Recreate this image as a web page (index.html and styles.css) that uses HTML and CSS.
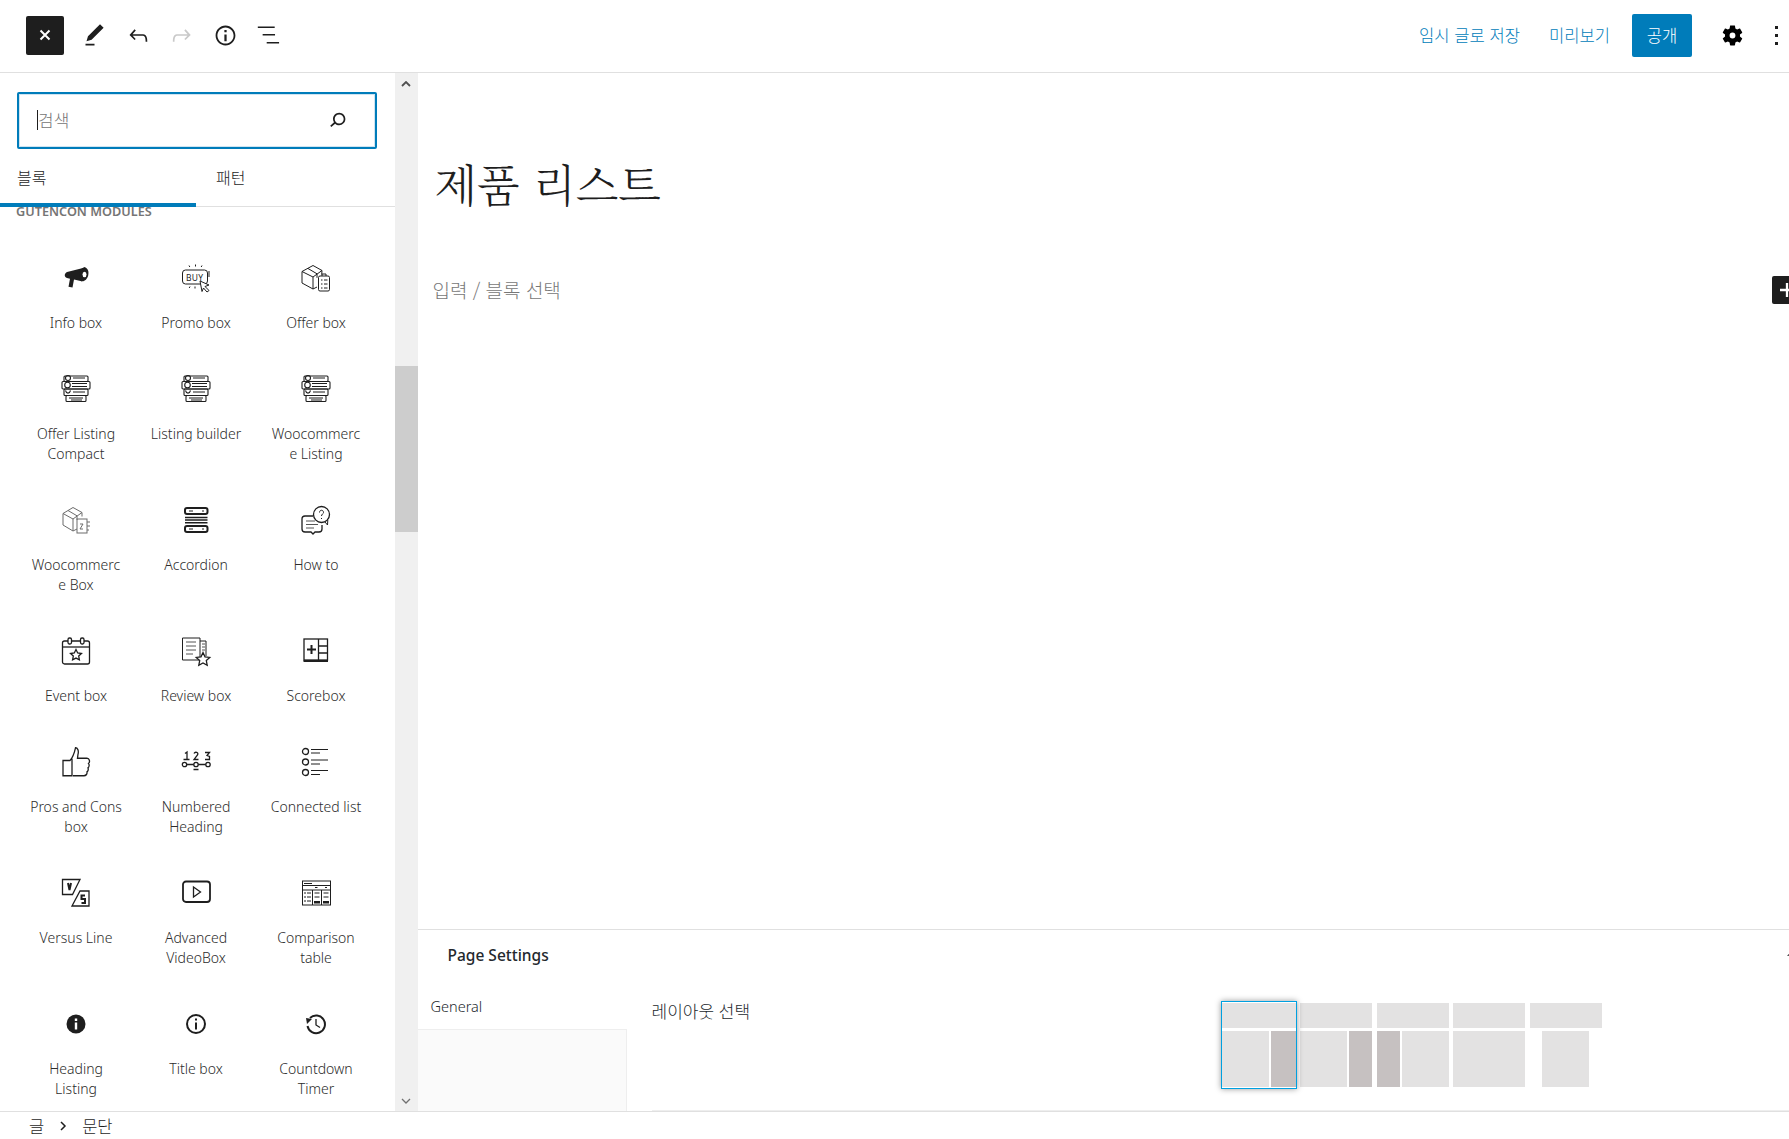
FILE: index.html
```html
<!DOCTYPE html>
<html lang="ko">
<head>
<meta charset="utf-8">
<title>제품 리스트</title>
<link rel="stylesheet" href="styles.css">
</head>
<body>
<div class="app">
  <header class="topbar">
    <div class="tools">
      <button class="close-btn" aria-label="닫기"><svg viewBox="0 0 16 16" width="16" height="16"><path d="M3.500 3.500l9 9M12.500 3.500l-9 9" stroke="#fff" stroke-width="2" fill="none"/></svg></button>
      <span class="tool"><svg viewBox="0 0 24 24"><path d="M20.100 5.100L16.900 2 6.200 12.700l-1.300 4.400 4.500-1.300L20.100 5.100zM4 20.800h8v-1.500H4v1.500z"/></svg></span>
      <span class="tool"><svg viewBox="0 0 24 24"><path d="M18.300 11.700c-.6-.6-1.400-.9-2.300-.9H6.700l2.900-3.300-1.100-1-4.500 5L8.500 16l1-1-2.700-2.700H16c.5 0 .9.2 1.300.5 1 1 1 3.400 1 4.500v.3h1.500v-.2c0-1.500 0-4.300-1.500-5.700z"/></svg></span>
      <span class="tool tool-off"><svg viewBox="0 0 24 24"><path d="M15.600 6.500l-1.100 1 2.900 3.300H8c-.9 0-1.700.3-2.300.9-1.400 1.500-1.400 4.200-1.400 5.700v.2h1.500v-.3c0-1.100 0-3.500 1-4.500.3-.3.7-.5 1.300-.5h9.200L14.500 15l1.100 1.100 4.600-4.600-4.600-5z"/></svg></span>
      <span class="tool"><svg viewBox="0 0 24 24"><path d="M12 3.200c-4.800 0-8.800 3.900-8.800 8.800 0 4.800 3.900 8.800 8.800 8.800 4.800 0 8.800-3.900 8.800-8.800 0-4.800-4-8.800-8.800-8.800zm0 16c-4 0-7.200-3.300-7.200-7.200C4.800 8 8 4.800 12 4.800s7.200 3.300 7.200 7.200c0 4-3.200 7.200-7.200 7.200zM11 17h2v-6h-2v6zm0-8h2V7h-2v2z"/></svg></span>
      <span class="tool"><svg viewBox="0 0 24 24"><path d="M2.500 4h15v1.400h-15zM6.800 10.600h11v1.400h-11zM10.400 17.800h11v1.400h-11z"/></svg></span>
    </div>
    <div class="actions">
      <a class="link save">임시 글로 저장</a>
      <a class="link preview">미리보기</a>
      <button class="publish">공개</button>
      <span class="gear"><svg viewBox="0 0 24 24" width="25" height="25"><path fill-rule="evenodd" d="M19.140 12.940c.04-.3.06-.61.06-.94 0-.32-.02-.64-.07-.94l2.030-1.580c.18-.14.23-.41.12-.61l-1.920-3.320c-.12-.22-.37-.29-.59-.22l-2.390.96c-.5-.38-1.030-.7-1.620-.94l-.36-2.540c-.04-.24-.24-.41-.48-.41h-3.840c-.24 0-.43.17-.47.41l-.36 2.540c-.59.24-1.130.57-1.620.94l-2.390-.96c-.22-.08-.47 0-.59.22L2.740 8.870c-.12.21-.08.47.12.61l2.030 1.580c-.05.3-.09.63-.09.94s.02.64.07.94l-2.030 1.580c-.18.14-.23.41-.12.61l1.920 3.320c.12.22.37.29.59.22l2.390-.96c.5.38 1.030.7 1.620.94l.36 2.540c.05.24.24.41.48.41h3.840c.24 0 .44-.17.47-.41l.36-2.540c.59-.24 1.130-.56 1.620-.94l2.390.96c.22.08.47 0 .59-.22l1.920-3.320c.12-.22.07-.47-.12-.61l-2.010-1.580zM12 14.800a2.800 2.800 0 1 1 0-5.600 2.800 2.800 0 0 1 0 5.600z"/></svg></span>
      <span class="kebab"><i></i><i></i><i></i></span>
    </div>
  </header>

  <main class="main">
    <aside class="inserter">
      <div class="panel">
        <div class="search">
          <span class="caret"></span><span class="search-ph">검색</span>
          <svg class="search-icon" viewBox="0 0 24 24" width="27" height="27"><path d="M13.500 6C10.500 6 8 8.500 8 11.500c0 1.100.3 2.100.9 3l-3.400 3 1 1.100 3.400-2.900c1 .9 2.200 1.400 3.600 1.400 3 0 5.500-2.500 5.500-5.500C19 8.500 16.500 6 13.500 6zm0 9.500c-2.200 0-4-1.800-4-4s1.800-4 4-4 4 1.800 4 4-1.800 4-4 4z"/></svg>
        </div>
        <div class="tabs">
          <div class="tab tab-on">블록</div>
          <div class="tab">패턴</div>
        </div>
        <div class="list">
          <div class="group-title">GUTENCON MODULES</div>
          <div class="grid">
            <div class="item"><svg class="ico" viewBox="0 0 30 30"><path d="M24 4.500c2.800.6 4.200 4 3.200 8-1 3.800-3.800 6.300-6.600 5.700L13 16.500l-1.500 8-4-.8 1.500-8-3-.7c-1.500-.4-2.500-1.600-2.200-3.200.2-1.300 1-2.200 2.300-2.800z"/><path class="n2" stroke="#fff" d="M24.200 4.700c-2.700.4-4.600 3-5.200 6.300-.4 2.600.3 5.300 1.800 7"/><ellipse class="w" cx="23.500" cy="11.500" rx="2" ry="2.700"/></svg><div class="lbl">Info box</div></div>
            <div class="item"><svg class="ico" viewBox="0 0 30 30"><rect class="n" x="1.500" y="7" width="25" height="14" rx="3"/><path class="n" d="M8 2.500l.8 1.500M14.500 1.500v2M21 2.500l-.8 1.500M9 23.500l-.8 1.500M14 23.500v2M28 8v6"/><text class="t" x="5" y="17.500">BUY</text><path class="n wf" d="M19 18l9 4-4 1.500 4 4-2 1.500-3.500-4-1.500 3.500z"/></svg><div class="lbl">Promo box</div></div>
            <div class="item"><svg class="ico" viewBox="0 0 30 30"><path class="n" d="M1 8.500L12 2.500l9 5-.3 4M1 8.500v11.500l11 6 4-2M1 8.500l11 5.500 9-6.500M12 14v12M7 5.500l9 5.300v4"/><rect class="n" x="17.500" y="13" width="11" height="15" rx="1.500"/><path class="n" d="M20 17h1.500M23 17h3.500M20 21h1.500M23 21h3.500M20 25h1.500M23 25h3.500M21 13v-2h4v2"/></svg><div class="lbl">Offer box</div></div>

            <div class="item"><svg class="ico listing" viewBox="0 0 30 30"><use href="#listing"/></svg><div class="lbl">Offer Listing Compact</div></div>
            <div class="item"><svg class="ico listing" viewBox="0 0 30 30"><use href="#listing"/></svg><div class="lbl">Listing builder</div></div>
            <div class="item"><svg class="ico listing" viewBox="0 0 30 30"><use href="#listing"/></svg><div class="lbl lbl-break">Woocommerce Listing</div></div>

            <div class="item"><svg class="ico soft" viewBox="0 0 30 30"><path class="n" d="M2 8.500L12 2.500l9 5v4M2 8.500v11.500l10 6 4-2M2 8.500l10 5.500 9-6.500M12 14v12M7 5.500l9 5.300v4"/><rect class="n" x="16" y="14" width="10" height="14"/><path class="n" d="M26 17h3M26 21h3M26 25h2M19 19h3l-3 5h3"/></svg><div class="lbl lbl-break">Woocommerce Box</div></div>
            <div class="item"><svg class="ico" viewBox="0 0 30 30"><rect class="b" x="4" y="3" width="22.500" height="6" rx="2"/><rect class="b" x="4" y="21" width="22.500" height="6" rx="2"/><path class="b2 dk" d="M4 12.500h22.500M4 15h22.500M4 17.800h22.500"/><path class="n" d="M8 6h4M8 24h4M21 6h2M21 24h2"/></svg><div class="lbl">Accordion</div></div>
            <div class="item"><svg class="ico" viewBox="0 0 30 30"><circle class="n2" cx="20.500" cy="9.500" r="8"/><path class="n" d="M18.500 7.500c0-3 4-3 4 0 0 1.500-2 1.500-2 3.500M20.500 13v1M24 17l2.500 3 .3-5"/><path class="n2" d="M12 11H4a3 3 0 0 0-3 3v10a3 3 0 0 0 3 3h6l2 2 2-2h4a3 3 0 0 0 3-3v-4"/><path class="b2" d="M5 16h9M5 19.500h12M5 23h8"/></svg><div class="lbl">How to</div></div>

            <div class="item"><svg class="ico" viewBox="0 0 30 30"><rect class="n2" x="1.500" y="5" width="27" height="23" rx="2"/><path class="n2" d="M1.500 11h27"/><rect class="n2 wf" x="7" y="2" width="3.500" height="6" rx="1.500"/><rect class="n2 wf" x="19.500" y="2" width="3.500" height="6" rx="1.500"/><path class="n2" d="M15 13.500l1.700 3.500 3.800.5-2.800 2.600.7 3.800-3.400-1.800-3.400 1.800.7-3.800-2.800-2.600 3.800-.5z"/></svg><div class="lbl">Event box</div></div>
            <div class="item"><svg class="ico" viewBox="0 0 30 30"><path class="n" d="M19 24H1.500V2H19zM19 5h6v15"/><path class="b2" d="M5 6h10M5 10h10M5 14h10M5 18h7M21 8h3M21 11h3M21 14h3"/><path class="n2 wf" d="M22 16.500l2 4.300 4.800.6-3.500 3.200.9 4.700-4.200-2.300-4.200 2.300.9-4.700-3.500-3.200 4.800-.6z"/></svg><div class="lbl">Review box</div></div>
            <div class="item"><svg class="ico" viewBox="0 0 30 30"><rect class="n2" x="3" y="3" width="23.500" height="21"/><path class="n2" d="M17.500 3v21M17.500 10h9M17.500 17h9"/><path class="b" d="M6 13.500h9M10.500 9v9"/><path class="b" d="M2.500 25h24.500"/></svg><div class="lbl">Scorebox</div></div>

            <div class="item"><svg class="ico" viewBox="0 0 30 30"><path class="n2" transform="translate(0 -1.500) scale(1 1.160)" d="M11 11.500V26H2V13h7c3-3 4.500-7 5.500-11 2 0 3.500 2.500 2.500 5.500L16.500 11H26a2.500 2.500 0 0 1 1.500 4.500c1 1 .8 3-.5 3.800.6 1.400 0 3-1 3.400.3 2-1 3.300-3 3.300H12"/></svg><div class="lbl">Pros and Cons box</div></div>
            <div class="item"><svg class="ico" viewBox="0 0 30 30"><path class="n2" d="M4 6.500l2-1.500v7M2.500 12.500h6M13 6.500c1-2 5-1.500 3.500 1.500L13 12.500h4.500M24 5.500h4.500l-2.500 3 2.500 1v3H24M5 17.500h20M12.500 22.500h5"/><circle class="n2 wf" cx="3.500" cy="17.500" r="2.200"/><circle class="n2 wf" cx="15" cy="17.500" r="2.200"/><circle class="n2 wf" cx="27" cy="17.500" r="2.200"/></svg><div class="lbl">Numbered Heading</div></div>
            <div class="item"><svg class="ico" viewBox="0 0 30 30"><circle class="n2" cx="4.500" cy="4.500" r="3"/><circle class="n2" cx="4.500" cy="15" r="3"/><circle class="n2" cx="4.500" cy="25.500" r="3"/><path class="n" d="M10 2.500h17M10 6h9M10 13h17M10 17h9M10 23.500h17M10 27.500h9"/></svg><div class="lbl">Connected list</div></div>

            <div class="item"><svg class="ico" viewBox="0 0 30 30"><path class="n2" d="M1.500 1.500H19l-7.500 15h-10zM11 28l8-15h9v15z"/><path class="b" d="M7 5l1.500 7 1.500-7M24 17.500h-3.500v3.500h3.500v4h-3.500"/></svg><div class="lbl">Versus Line</div></div>
            <div class="item"><svg class="ico" viewBox="0 0 30 30"><rect class="n2b" x="2" y="3.500" width="27" height="20.500" rx="3"/><path class="n2" d="M12.500 9l7 5-7 5z"/></svg><div class="lbl">Advanced VideoBox</div></div>
            <div class="item"><svg class="ico" viewBox="0 0 30 30"><rect class="n" x="1.500" y="3" width="28" height="24"/><path class="n" d="M1.500 7.500h28M1.500 12h28M11.500 12v15M20.500 12v15M3 5.500h8M14 9.500h2.500M24 9.500h2M3 15h2M6 15h4M3 19h2M6 19h4M3 23h2M6 23h4M13.500 15h5M13.500 19h5M22.500 15h5M22.500 19h5"/><rect x="13" y="23" width="6" height="2.500"/><rect x="22" y="23" width="6" height="2.500"/></svg><div class="lbl">Comparison table</div></div>

            <div class="item"><svg class="ico" viewBox="0 0 30 30"><circle cx="15" cy="15" r="9.500"/><path fill="#fff" d="M13.800 13.500h2.400v7h-2.400zM13.800 9.500h2.400v2.400h-2.400z"/></svg><div class="lbl">Heading Listing</div></div>
            <div class="item"><svg class="ico" viewBox="0 0 30 30"><circle class="b" cx="15" cy="15" r="9"/><path d="M14 13.500h2v7h-2zM14 9.500h2v2h-2z"/></svg><div class="lbl">Title box</div></div>
            <div class="item"><svg class="ico" viewBox="0 0 30 30"><path class="b" d="M9 9a8.800 8.800 0 1 1-2.500 8"/><path d="M5 9l6 1-5 5z"/><path class="n2" d="M15 10v6l4 2.500"/></svg><div class="lbl">Countdown Timer</div></div>
          </div>
        </div>
      </div>
      <div class="scrollbar">
        <svg class="arrow" viewBox="0 0 10 6" width="10" height="6"><path d="M1 5l4-4 4 4" fill="none" stroke="#505050" stroke-width="1.800"/></svg>
        <div class="track"><div class="thumb"></div></div>
        <svg class="arrow" viewBox="0 0 10 6" width="10" height="6"><path d="M1 1l4 4 4-4" fill="none" stroke="#707070" stroke-width="1.300"/></svg>
      </div>
    </aside>

    <section class="editor">
      <div class="canvas">
        <h1 class="post-title">제품 리스트</h1>
        <div class="para-row">
          <p class="placeholder">입력 / 블록 선택</p>
          <button class="plus"><svg viewBox="0 0 18 18" width="18" height="18"><path d="M9 2v14M2 9h14" stroke="#fff" stroke-width="2.300"/></svg></button>
        </div>
      </div>
      <div class="settings">
        <div class="settings-head">
          <h2 class="settings-title">Page Settings</h2>
          <span class="up"></span>
        </div>
        <div class="settings-body">
          <div class="side-tabs">
            <div class="side-tab">General</div>
            <div class="side-rest"></div>
          </div>
          <div class="field">
            <div class="field-label">레이아웃 선택</div>
            <div class="layouts">
              <div class="layout layout-on"><div class="l-top"></div><div class="l-bot"><div class="l-wide"></div><div class="l-dark"></div></div></div>
              <div class="layout"><div class="l-top"></div><div class="l-bot"><div class="l-wide"></div><div class="l-dark"></div></div></div>
              <div class="layout"><div class="l-top"></div><div class="l-bot"><div class="l-dark"></div><div class="l-wide"></div></div></div>
              <div class="layout"><div class="l-top"></div><div class="l-bot"><div class="l-full"></div></div></div>
              <div class="layout"><div class="l-top"></div><div class="l-bot l-center"><div class="l-wide"></div></div></div>
            </div>
          </div>
        </div>
      </div>
    </section>
  </main>

  <footer class="crumbs"><span>글</span><svg viewBox="0 0 8 12" width="8" height="12"><path d="M2 2l4 4-4 4" fill="none" stroke="#1e1e1e" stroke-width="1.500"/></svg><span>문단</span></footer>
</div>
<svg class="defs" width="0" height="0">
  <defs>
    <g id="listing" fill="none" stroke="#1e1e1e" stroke-width="1.100">
      <rect x="3" y="2" width="24" height="5.500" rx="1"/>
      <rect x="1" y="7.500" width="28" height="7.500" rx="1"/>
      <rect x="3" y="15" width="24" height="6.500" rx="1"/>
      <rect x="5" y="21.500" width="20" height="6" rx="1"/>
      <circle cx="7" cy="4" r="2.500"/><circle cx="6.500" cy="11" r="2.800" fill="#fff"/>
      <path d="M4.500 16.500c1 3.500 4 3.500 5 0M12 4h12M11 9.500h15M11 12.500h15M12 18h12M8 24h14M10 26h11"/>
    </g>
  </defs>
</svg>
</body>
</html>
```

FILE: styles.css
```css
* { box-sizing: border-box; }
html, body { margin: 0; padding: 0; height: 100%; overflow: hidden; background: #fff; }
body { font-family: "Noto Sans", "Noto Sans CJK KR", sans-serif; color: #1e1e1e; }
button { border: 0; padding: 0; font: inherit; }
p, h1, h2 { margin: 0; }
.defs { display: block; height: 0; overflow: hidden; }

.app { display: flex; flex-direction: column; width: 1789px; height: 1139px; overflow: hidden; }

.topbar { flex: 0 0 73px; display: flex; align-items: center; justify-content: space-between; border-bottom: 1px solid #e0e0e0; padding: 0 0 2px 26px; }
.tools { display: flex; align-items: center; }
.close-btn { width: 38px; height: 39px; background: #1e1e1e; border-radius: 2px; display: flex; align-items: center; justify-content: center; margin-right: 9px; }
.tool { width: 43.500px; height: 43px; display: flex; align-items: center; justify-content: center; }
.tool svg { width: 27px; height: 27px; fill: #1e1e1e; }
.tool-off svg { fill: #c9c9c9; }

.actions { display: flex; align-items: center; }
.link { color: #007cba; font-size: 16.600px; font-family: "Noto Sans CJK KR", sans-serif; font-weight: 300; }
.save { margin-right: 29px; }
.preview { margin-right: 22px; }
.publish { width: 60px; height: 43px; background: #007cba; color: #fff; border-radius: 2px; font-size: 16.600px; font-family: "Noto Sans CJK KR", sans-serif; font-weight: 300; margin-right: 28px; }
.gear { display: flex; margin-right: 30px; }
.kebab { display: flex; flex-direction: column; gap: 5px; width: 4px; margin-right: 10px; }
.kebab i { width: 3px; height: 3px; background: #1e1e1e; display: block; }

.main { flex: 0 0 1038px; display: flex; min-height: 0; }

.inserter { flex: 0 0 417.500px; display: flex; }
.panel { flex: 0 0 395px; display: flex; flex-direction: column; padding-top: 19px; min-height: 0; }
.search { margin: 0 18px 0 17px; height: 57px; border: 2px solid #007cba; border-radius: 2px; box-shadow: inset 0 0 0 1px #cfe4f1; display: flex; align-items: center; padding: 0 0 2px 18px; flex: none; }
.caret { width: 1px; height: 20px; background: #1e1e1e; }
.search-ph { flex: 1; color: #757575; font: 300 17px "Noto Sans CJK KR", sans-serif; }
.search-icon { fill: #1e1e1e; margin-right: 24px; }
.tabs { display: flex; flex: none; height: 58px; border-bottom: 1px solid #e0e0e0; }
.tab { width: 196px; padding: 16px 0 0 17px; font: 300 16px "Noto Sans CJK KR", sans-serif; color: #1e1e1e; height: 58px; }
.tab + .tab { padding-left: 20px; }
.tab-on { border-bottom: 4px solid #007cba; }
.list { flex: 1; min-height: 0; overflow: hidden; padding: 0 19px 0 16px; }
.group-title { font-size: 12.700px; font-weight: 600; color: #757575; line-height: 16px; height: 9px; position: relative; top: -4px; white-space: nowrap; }
.grid { display: grid; grid-template-columns: repeat(3, 120px); margin-top: 10px; }
.item { padding: 32px 12px 4px; display: flex; flex-direction: column; align-items: center; }
.ico { width: 30px; height: 40px; flex: none; fill: #1e1e1e; overflow: visible; margin-bottom: 15px; }
.n, .n2, .n2b, .b, .b2 { fill: none; stroke: #1e1e1e; }
.n { stroke-width: 1; }
.n2 { stroke-width: 1.300; }
.n2b { stroke-width: 1.800; }
.b { stroke-width: 2; }
.b2 { stroke-width: 1; stroke: #555; }
.b2.dk { stroke-width: 1.500; stroke: #1e1e1e; }
.wf { fill: #fff; }
.w { fill: #fff; }
.t { font: 400 8.500px "Noto Sans", sans-serif; letter-spacing: .3px; }
.soft { opacity: .65; }
.lbl { width: 100%; font-size: 14px; line-height: 20px; text-align: center; color: #2c2c2c; font-weight: 300; }
.lbl-break { width: 92px; overflow-wrap: anywhere; word-break: break-all; }

.scrollbar { flex: 0 0 22.500px; background: #f0f0f0; display: flex; flex-direction: column; align-items: center; padding: 8px 0 7px; }
.arrow { flex: none; }
.track { flex: 1; width: 100%; padding-top: 279px; }
.thumb { height: 166px; background: #cdcdcd; }

.editor { flex: 1; min-width: 0; display: flex; flex-direction: column; }
.canvas { flex: 1; min-height: 0; padding: 79px 0 0 17px; }
.post-title { font: 300 44px/62px "Noto Serif CJK KR", "Noto Sans CJK KR", serif; color: #1e1e1e; }
.para-row { display: flex; justify-content: space-between; align-items: center; margin-top: 62px; }
.placeholder { font: 300 19px/28px "Noto Sans CJK KR", sans-serif; color: #777; margin-left: -2px; }
.plus { width: 17px; height: 28px; background: #1e1e1e; border-radius: 2px 0 0 2px; display: flex; align-items: center; justify-content: flex-start; padding-left: 6px; overflow: hidden; flex: none; }
.plus svg { flex: none; }

.settings { flex: 0 0 182px; border-top: 1px solid #e0e0e0; display: flex; flex-direction: column; }
.settings-head { flex: 0 0 50px; display: flex; align-items: center; justify-content: space-between; padding-left: 30px; }
.settings-title { font-size: 15.500px; font-weight: 500; color: #23282d; }
.up { width: 0; height: 0; border-left: 4px solid transparent; border-right: 4px solid transparent; border-bottom: 5px solid #555; margin-right: -6px; margin-top: -3px; }
.settings-body { flex: 1; display: flex; min-height: 0; }
.side-tabs { flex: 0 0 209px; display: flex; flex-direction: column; }
.side-tab { flex: 0 0 49px; padding: 16px 0 0 13px; font-size: 14.500px; line-height: 20px; color: #23282d; font-weight: 300; }
.side-rest { flex: 1; background: #fafafa; border-top: 1px solid #eee; border-right: 1px solid #eee; }
.field { flex: 1; min-width: 0; display: flex; margin-left: 25px; border-bottom: 1px solid #eee; }
.field-label { flex: 0 0 570px; font: 300 17px/24px "Noto Sans CJK KR", sans-serif; padding-top: 19px; color: #23282d; }
.layouts { display: flex; gap: 4.500px; padding-top: 22px; }
.layout { width: 72px; height: 86px; display: flex; flex-direction: column; gap: 3px; padding-top: 1px; }
.layout-on { width: 74px; outline: 1px solid #00a0e0; box-shadow: 0 0 6px 1px rgba(0, 0, 0, .4); position: relative; }
.l-top { height: 25px; background: #e3e2e2; flex: none; }
.l-bot { height: 56px; display: flex; gap: 2px; flex: none; }
.l-center { justify-content: center; }
.l-wide { width: 47px; background: #e3e2e2; }
.l-dark { flex: 1; background: #c6c1c1; }
.l-full { flex: 1; background: #e3e2e2; }

.crumbs { flex: 0 0 28px; border-top: 1px solid #e0e0e0; display: flex; align-items: center; gap: 15px; padding-left: 29px; font: 300 16.500px "Noto Sans CJK KR", sans-serif; color: #1e1e1e; }
```
